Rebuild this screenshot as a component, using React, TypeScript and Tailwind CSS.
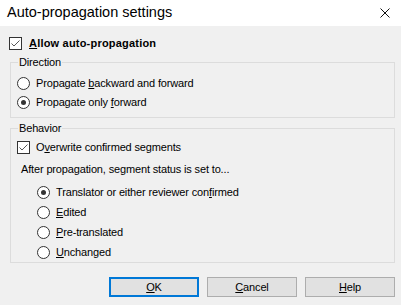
import React from 'react'

const FONT = { fontFamily: '"Liberation Sans", Arial, sans-serif' }

function CheckBox({ checked }: { checked: boolean }) {
  return (
    <span className="flex h-[13px] w-[13px] shrink-0 items-center justify-center border border-[#333333] bg-white">
      {checked && (
        <svg width="11" height="11" viewBox="0 0 11 11">
          <polyline points="1.5,5.5 4,8 9.5,2.5" fill="none" stroke="#444444" strokeWidth="0.9" />
        </svg>
      )}
    </span>
  )
}

function Radio({ checked }: { checked: boolean }) {
  return (
    <span className="flex h-[13px] w-[13px] shrink-0 items-center justify-center rounded-full border border-[#333333] bg-white">
      {checked && <span className="h-[5px] w-[5px] rounded-full bg-[#333333]" />}
    </span>
  )
}

function Key({ children }: { children: React.ReactNode }) {
  return <u className="underline-offset-[1px]">{children}</u>
}

function Group({ label, className, children }: { label: string; className: string; children: React.ReactNode }) {
  return (
    <div className={`relative box-border border border-[#dcdcdc] ${className}`}>
      <span className="absolute -top-[7px] left-[7px] bg-[#f0f0f0] px-[1px] leading-[13px]">{label}</span>
      {children}
    </div>
  )
}

function Button({ children, primary }: { children: React.ReactNode; primary?: boolean }) {
  return (
    <button
      className={`box-border flex h-[20px] w-[90px] items-center justify-center bg-[#e1e1e1] text-black ${
        primary ? 'border-2 border-[#0078d7]' : 'border border-[#adadad]'
      }`}
    >
      {children}
    </button>
  )
}

export default function App() {
  return (
    <div
      className="h-[305px] w-[401px] overflow-hidden bg-[#f0f0f0] text-[11px] tracking-[-0.15px] text-black"
      style={FONT}
    >
      <div className="flex h-[26px] items-center justify-between bg-white pl-[7px] pr-[11px]">
        <span className="text-[14.5px] tracking-normal">Auto-propagation settings</span>
        <svg width="10" height="10" viewBox="0 0 10 10">
          <path d="M0.5 0.5L9.5 9.5M9.5 0.5L0.5 9.5" stroke="#111111" strokeWidth="1" />
        </svg>
      </div>

      <div className="flex flex-col pl-[10px] pr-[6px]">
        <div className="-ml-[1px] mt-[11px] flex h-[13px] items-center gap-[7px]">
          <CheckBox checked />
          <span className="font-bold tracking-[0.2px]">
            <Key>A</Key>llow auto-propagation
          </span>
        </div>

        <Group label="Direction" className="mt-[12px] h-[56px] pl-[6px] pt-[11px]">
          <div className="flex h-[19px] items-center gap-[6px]">
            <Radio checked={false} />
            <span>
              Propagate <Key>b</Key>ackward and forward
            </span>
          </div>
          <div className="flex h-[19px] items-center gap-[6px]">
            <Radio checked />
            <span>
              Propagate only <Key>f</Key>orward
            </span>
          </div>
        </Group>

        <Group label="Behavior" className="mt-[10px] h-[135px] pt-[9px]">
          <div className="flex h-[19px] items-center gap-[6px] pl-[6px]">
            <CheckBox checked />
            <span>
              O<Key>v</Key>erwrite confirmed segments
            </span>
          </div>
          <div className="mt-[3px] flex h-[19px] items-center pl-[10px]">After propagation, segment status is set to...</div>
          <div className="mt-[3px] flex flex-col pl-[26px]">
            <div className="flex h-[20px] items-center gap-[6px]">
              <Radio checked />
              <span>
                Translator or either reviewer con<Key>f</Key>irmed
              </span>
            </div>
            <div className="flex h-[20px] items-center gap-[6px]">
              <Radio checked={false} />
              <span>
                <Key>E</Key>dited
              </span>
            </div>
            <div className="flex h-[20px] items-center gap-[6px]">
              <Radio checked={false} />
              <span>
                <Key>P</Key>re-translated
              </span>
            </div>
            <div className="flex h-[20px] items-center gap-[6px]">
              <Radio checked={false} />
              <span>
                <Key>U</Key>nchanged
              </span>
            </div>
          </div>
        </Group>

        <div className="mt-[14px] flex justify-end gap-[8px]">
          <Button primary>
            <Key>O</Key>K
          </Button>
          <Button>
            <Key>C</Key>ancel
          </Button>
          <Button>
            <Key>H</Key>elp
          </Button>
        </div>
      </div>
    </div>
  )
}
